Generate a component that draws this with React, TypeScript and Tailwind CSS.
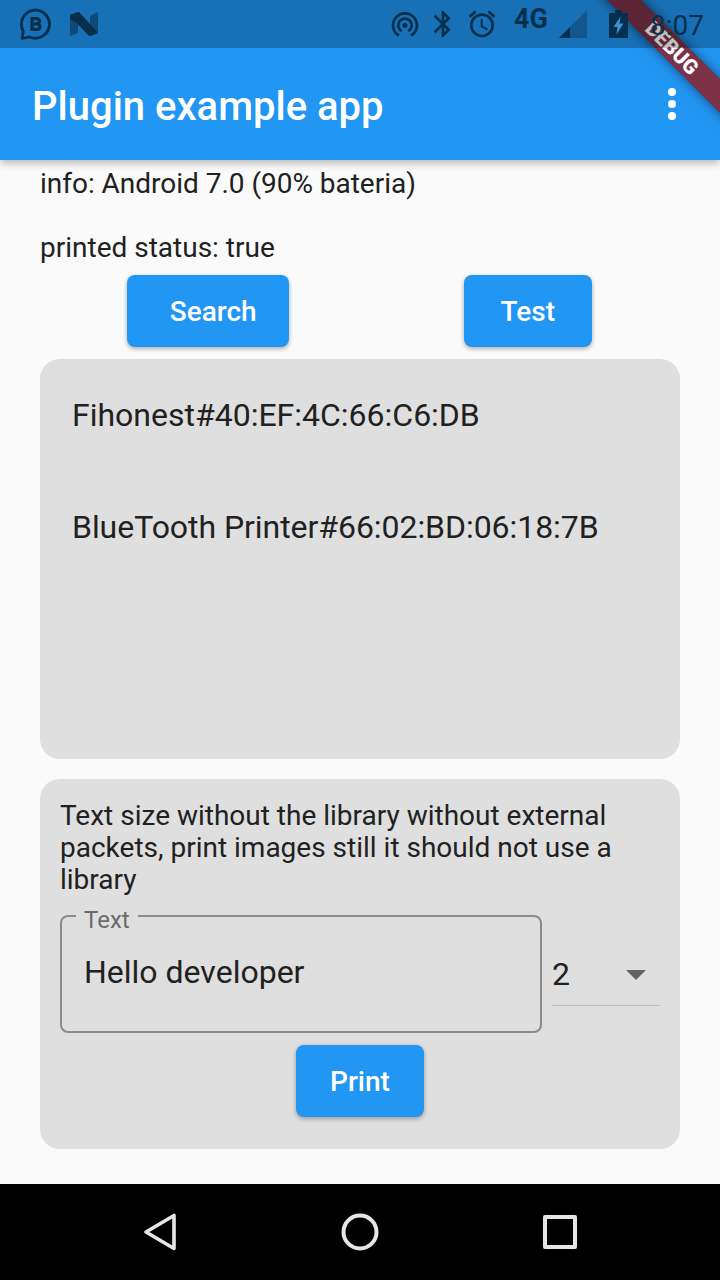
import { MdAccessAlarm, MdBluetooth, MdWifiTethering } from 'react-icons/md';

const raised = 'rounded-lg bg-[#2196f3] pt-0.5 text-[28px] leading-8 font-medium text-white shadow-[0_2px_4px_rgba(0,0,0,0.24),0_1px_5px_rgba(0,0,0,0.1)]';

function StatusBar() {
  return (
    <div className="absolute inset-x-0 top-0 flex h-12 items-center bg-black/25 pl-[20px] text-[#07304f]">
      <svg className="size-8" viewBox="0 0 32 32" fill="none" stroke="currentColor" strokeWidth="2.8">
        <path d="M2.2 30.4 L3.2 23 A14 14 0 1 1 9.6 28.9 Z" strokeLinejoin="round" />
        <path d="M12 10.7 H16.8 A2.6 2.6 0 0 1 16.8 16 H12 H17.4 A2.7 2.7 0 0 1 17.4 21.4 H12 Z" strokeWidth="3.2" />
      </svg>
      <svg className="ml-[18px] h-6 w-7" viewBox="0 0 28 24">
        <path d="M0 3 L8 0 V21 L0 24 Z M20 4 L28 0 V21 L20 24 Z" fill="#07304f" opacity=".6" />
        <path d="M0 3 L8.5 0 L28 21 L20 24 L0 4 Z" fill="#082f4b" />
        <path d="M0 3 L9 0 L28 21 L19 24 L6 10 L0 8 Z" fill="#082f4b" />
      </svg>
      <MdWifiTethering className="ml-[291px] size-8" />
      <MdBluetooth className="ml-[6px] size-8" />
      <MdAccessAlarm className="ml-[7px] size-8" />
      <span className="mt-[-11px] ml-[16px] w-[36px] text-[27px] leading-6 font-bold">4G</span>
      <svg className="ml-[9px] size-7" viewBox="0 0 28 28">
        <path d="M28 0 V28 H0 Z" fill="currentColor" opacity=".4" />
        <path d="M11 17 V28 H0 Z" fill="currentColor" />
      </svg>
      <svg className="ml-[22px] h-7 w-[19px]" viewBox="0 0 19 28">
        <path fill="currentColor" d="M6 0 H13 V3 H19 V28 H0 V3 H6 Z" />
        <path fill="#3b8fd3" d="M11.5 6.5 L4.5 17 H8.5 L7.5 24.5 L14.5 13.5 H10.5 Z" />
      </svg>
      <span className="mt-[3px] ml-[22px] text-[28px] leading-8">8:07</span>
    </div>
  );
}

function NavBar() {
  return (
    <nav className="flex h-24 items-center justify-between bg-black px-[140px]">
      <svg className="size-10" viewBox="0 0 40 40" fill="none" stroke="#e6e6e6" strokeWidth="3.6" strokeLinejoin="round">
        <path d="M34 3.5 V36.5 L6 20 Z" />
      </svg>
      <svg className="size-10" viewBox="0 0 40 40" fill="none" stroke="#e6e6e6" strokeWidth="4">
        <circle cx="20" cy="20" r="16.5" />
      </svg>
      <svg className="size-10" viewBox="0 0 40 40" fill="none" stroke="#e6e6e6" strokeWidth="4" strokeLinejoin="round">
        <rect x="5" y="5" width="30" height="30" />
      </svg>
    </nav>
  );
}

export default function App() {
  return (
    <div className="relative flex h-[1280px] w-[720px] flex-col overflow-hidden bg-[#fafafa] font-['Roboto',sans-serif] text-[#212121]">
      <header className="flex h-40 items-center justify-between bg-[#2196f3] pt-12 pr-11 pl-8 text-white shadow-[0_3px_8px_rgba(0,0,0,0.28)]">
        <h1 className="pt-[5px] text-[40px] leading-[48px] font-medium">Plugin example app</h1>
        <div className="flex flex-col gap-1">
          <i className="size-2 rounded-full bg-white" />
          <i className="size-2 rounded-full bg-white" />
          <i className="size-2 rounded-full bg-white" />
        </div>
      </header>

      <main className="flex flex-1 flex-col px-10 pt-2">
        <p className="h-16 text-[28px] leading-8 tracking-[-0.02px]">info: Android 7.0 (90% bateria)</p>
        <p className="text-[28px] leading-8">printed status: true</p>
        <div className="mt-[11px] flex justify-around pr-px">
          <button className={`h-[72px] w-[162px] pl-[10px] ${raised}`}>Search</button>
          <button className={`h-[72px] w-32 ${raised}`}>Test</button>
        </div>
        <ul className="mt-3 flex h-[400px] flex-col rounded-[20px] bg-[#dfdfdf] px-8 text-[32px] leading-[38px]">
          <li className="flex h-28 items-center">Fihonest#40:EF:4C:66:C6:DB</li>
          <li className="flex h-28 items-center tracking-[-0.05px]">BlueTooth Printer#66:02:BD:06:18:7B</li>
        </ul>
        <section className="mt-5 flex h-[370px] flex-col rounded-[20px] bg-[#dfdfdf] px-5 pt-[21px]">
          <p className="text-[28px] leading-8">
            Text size without the library without external packets, print images still it should not use a library
          </p>
          <div className="mt-[19px] flex items-center gap-[10px]">
            <div className="relative flex h-[118px] w-[482px] items-center rounded-lg border-2 border-[#8b8b8b] px-[22px] pb-[5px]">
              <label className="absolute top-[-11px] left-[14px] bg-[#dfdfdf] px-2 text-[24px] leading-7 text-[#6b6b6b]">Text</label>
              <span className="text-[32px] leading-[38px]">Hello developer</span>
            </div>
            <div className="mt-0.5 flex h-[62px] w-[108px] items-center justify-between border-b border-[#bdbdbd] pr-[14px] text-[32px] leading-[38px]">
              <span className="-mt-0.5">2</span>
              <svg className="h-[10px] w-5" viewBox="0 0 20 10"><path d="M0 0 H20 L10 10 Z" fill="#636363" /></svg>
            </div>
          </div>
          <button className={`mt-3 h-[72px] w-32 self-center ${raised}`}>Print</button>
        </section>
      </main>

      <NavBar />

      <div className="absolute top-[36px] left-[572px] flex h-6 w-[200px] rotate-45 items-center justify-center bg-[#7b3249] text-[20.4px] leading-6 font-black text-white shadow-[0_0_12px_rgba(0,0,0,0.5)]">
        DEBUG
      </div>
      <StatusBar />
    </div>
  );
}
